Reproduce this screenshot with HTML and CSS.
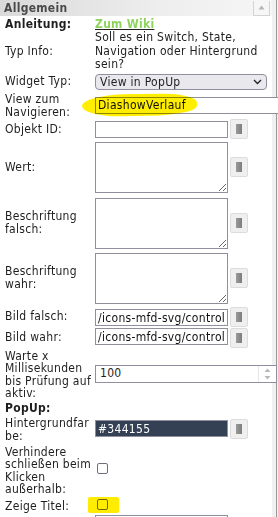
FILE: index.html
```html
<!DOCTYPE html>
<html>
<head>
<meta charset="utf-8">
<link rel="stylesheet" href="styles.css">
</head>
<body>
<div class="panel">
  <div class="head">
    <span class="head-title">Allgemein</span>
    <span class="head-btn"><svg width="7" height="5" viewBox="0 0 7 5"><path d="M0.5 4.5 L3.5 0.5 L6.5 4.5 Z" fill="#b5b5b5"/></svg></span>
  </div>
  <div class="rows">
    <div class="lbl bold r-anl">Anleitung:</div>
    <div class="ctl r-anl"><a class="wiki">Zum Wiki</a></div>

    <div class="lbl">Typ Info:</div>
    <div class="ctl info">Soll es ein Switch, State, Navigation oder Hintergrund sein?</div>

    <div class="lbl">Widget Typ:</div>
    <div class="ctl">
      <div class="selwrap">
        <select class="sel"><option>View in PopUp</option></select>
        <svg class="chev" width="9" height="6" viewBox="0 0 9 6"><path d="M1 1 L4.5 4.5 L8 1" fill="none" stroke="#222" stroke-width="1.3"/></svg>
      </div>
    </div>

    <div class="lbl r-view">View zum Navigieren:</div>
    <div class="ctl">
      <input class="txt wide" value="DiashowVerlauf">
      <span class="marker"></span>
    </div>

    <div class="lbl">Objekt ID:</div>
    <div class="ctl"><input class="txt m2" value=""><span class="btn"><i></i></span></div>

    <div class="lbl">Wert:</div>
    <div class="ctl"><textarea class="area"></textarea><span class="btn"><i></i></span></div>

    <div class="lbl">Beschriftung falsch:</div>
    <div class="ctl"><textarea class="area"></textarea><span class="btn"><i></i></span></div>

    <div class="lbl">Beschriftung wahr:</div>
    <div class="ctl"><textarea class="area"></textarea><span class="btn"><i></i></span></div>

    <div class="lbl">Bild falsch:</div>
    <div class="ctl"><input class="txt m-bf" value="/icons-mfd-svg/control_on_off.svg"><span class="btn"><i></i></span></div>

    <div class="lbl">Bild wahr:</div>
    <div class="ctl"><input class="txt m-bw" value="/icons-mfd-svg/control_on_off.svg"><span class="btn"><i></i></span></div>

    <div class="lbl r-warte">Warte x Millisekunden bis Prüfung auf aktiv:</div>
    <div class="ctl">
      <div class="num"><span class="numval">100</span><span class="spin"><svg width="7" height="12" viewBox="0 0 7 12"><path d="M0.5 4 L3.5 0.5 L6.5 4 Z M0.5 8 L3.5 11.5 L6.5 8 Z" fill="#b8b8b8"/></svg></span></div>
    </div>

    <div class="lbl bold r-popup">PopUp:</div>
    <div class="ctl"></div>

    <div class="lbl r-hg">Hintergrundfarbe:</div>
    <div class="ctl"><input class="txt dark" value="#344155"><span class="btn"><i></i></span></div>

    <div class="lbl r-verh">Verhindere schließen beim Klicken außerhalb:</div>
    <div class="ctl"><span class="chk"></span></div>

    <div class="lbl r-zeige">Zeige Titel:</div>
    <div class="ctl"><span class="chk"></span><span class="marker2"></span></div>

    <div class="lbl"></div>
    <div class="ctl"><input class="txt m-last" value=""></div>
  </div>
</div>
</body>
</html>
```
FILE: styles.css
```css
html, body {
  margin: 0;
  padding: 0;
}
body {
  width: 278px;
  height: 517px;
  overflow: hidden;
  font-family: "DejaVu Sans Condensed", "DejaVu Sans", sans-serif;
  font-size: 12px;
  letter-spacing: 0.3px;
  color: #1e1e1e;
  background: linear-gradient(to right, #fff 0, #fff 272px, #f0f0f0 272px, #f0f0f0 276px, #9a9a9a 276px, #9a9a9a 277px, #f0f0f0 277px);
}
.panel {
  width: 272px;
}
.head {
  height: 16px;
  display: flex;
  align-items: center;
  justify-content: space-between;
  padding-left: 4px;
  background: linear-gradient(to right, #dadada, #eeeeee 60%, #f6f6f6);
}
.head-title {
  font-weight: bold;
  color: #4a4a4a;
  font-size: 12px;
}
.head-btn {
  width: 17px;
  height: 15px;
  margin-right: 2px;
  border: 1px solid #d4d4d4;
  border-top: none;
  background: #f6f6f6;
  display: flex;
  align-items: center;
  justify-content: center;
  box-sizing: border-box;
}
.rows {
  display: grid;
  grid-template-columns: 90px minmax(0, 1fr);
  padding-left: 5px;
  line-height: 13px;
}
.lbl {
  display: flex;
  align-items: center;
  overflow-wrap: anywhere;
  padding-right: 2px;
}
.bold {
  font-weight: bold;
}
.ctl {
  display: flex;
  align-items: center;
  gap: 2px;
  position: relative;
}
.r-anl {
  padding-top: 1.5px;
}
.r-view {
  padding-top: 1px;
}
.r-warte {
  line-height: 12.5px;
  padding-top: 1.5px;
}
.r-popup {
  padding-top: 2.5px;
}
.r-hg {
  line-height: 12.5px;
  padding-top: 2px;
}
.r-verh {
  line-height: 12.6px;
  padding-top: 3.5px;
}
.r-zeige {
  padding-top: 4.5px;
}
.wiki {
  color: #8ed45c;
  font-weight: bold;
  text-decoration: underline;
  text-decoration-color: #222;
}
.info {
  line-height: 13.5px;
  padding-top: 0.5px;
  display: block;
}
.selwrap {
  position: relative;
  width: 172px;
  height: 16px;
  margin: 2px 0;
}
.sel {
  appearance: none;
  -webkit-appearance: none;
  width: 100%;
  height: 16px;
  box-sizing: border-box;
  border: 1px solid #8f8f9d;
  border-radius: 4px;
  background: #e9e9ed;
  font-family: inherit;
  font-size: 12px;
  letter-spacing: 0.3px;
  color: #1e1e1e;
  padding: 0 0 0 4px;
  margin: 0;
}
.chev {
  position: absolute;
  right: 5px;
  top: 5px;
}
.txt {
  width: 133px;
  height: 17px;
  box-sizing: border-box;
  border: 1px solid #8f8f9d;
  border-radius: 0;
  padding: 0 2px;
  margin: 0;
  font-family: inherit;
  font-size: 12px;
  letter-spacing: 0.3px;
  color: #111;
  background: #fff;
  flex: none;
}
.m2 {
  margin: 2px 0;
}
.m-bf {
  margin: 3px 0 1px;
}
.m-bw {
  margin: 1px 0 3px;
}
.m-last {
  margin-top: 1.5px;
}
.wide {
  width: 190px;
}
.dark {
  background: #344155;
  color: #fff;
}
.area {
  width: 133px;
  height: 51px;
  box-sizing: border-box;
  border: 1px solid #8f8f9d;
  margin: 2.5px 0 2px;
  padding: 2px;
  font-family: inherit;
  font-size: 12px;
  flex: none;
}
.btn {
  width: 18px;
  height: 20px;
  box-sizing: border-box;
  border: 1px solid #dcdcdc;
  border-radius: 2px;
  background: #efefef;
  display: flex;
  align-items: center;
  justify-content: center;
  flex: none;
}
.btn i {
  width: 6px;
  height: 10px;
  background: linear-gradient(to right, #9a9a9a, #7d7d7d);
}
.num {
  width: 182px;
  height: 18px;
  box-sizing: border-box;
  border: 1px solid #8f8f9d;
  display: flex;
  align-items: center;
  justify-content: space-between;
  background: #fff;
  flex: none;
}
.numval {
  padding-left: 4px;
}
.spin {
  width: 16px;
  height: 16px;
  display: flex;
  align-items: center;
  justify-content: center;
  border-left: 1px solid #e6e6e6;
  margin-right: 1px;
}
.chk {
  width: 11px;
  height: 11px;
  box-sizing: border-box;
  border: 1px solid #6f6f7a;
  border-radius: 2px;
  margin-left: 2px;
  background: #fff;
}
.marker {
  position: absolute;
  left: -13px;
  top: 2.5px;
  width: 115px;
  height: 22px;
  background: #ffee00;
  border-radius: 45% 40% 50% 40% / 60% 50% 50% 60%;
  mix-blend-mode: multiply;
  transform: rotate(-1deg);
}
.marker2 {
  position: absolute;
  left: -7px;
  top: 1px;
  width: 31px;
  height: 16px;
  background: #ffec00;
  border-radius: 2px;
  mix-blend-mode: multiply;
}
```
